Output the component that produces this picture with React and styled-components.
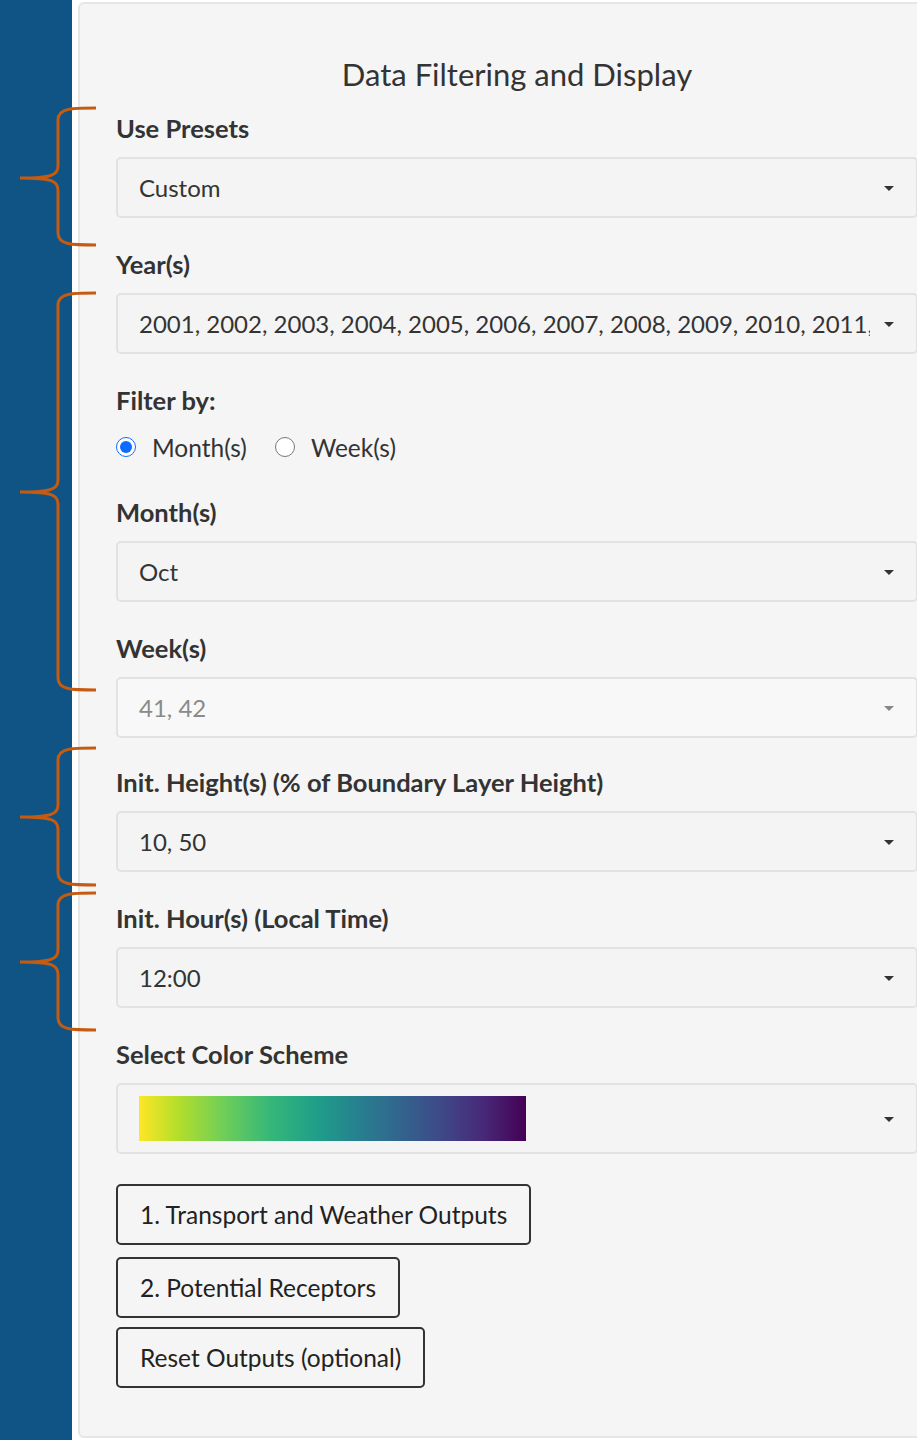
import React from 'react'
import styled, { createGlobalStyle } from 'styled-components'

const GlobalStyle = createGlobalStyle`
  html, body {
    margin: 0;
    padding: 0;
    background: #ffffff;
    overflow-x: hidden;
  }
  body {
    font-family: Lato, "Open Sans", "Liberation Sans", sans-serif;
    color: #333333;
  }
`

const Page = styled.div`
  position: relative;
  display: flex;
  gap: 6px;
  width: 100%;
  min-height: 1440px;
`

const Sidebar = styled.div`
  flex: 0 0 72px;
  background: #0f5484;
`

const Panel = styled.div`
  flex: 0 0 878px;
  min-width: 0;
  box-sizing: border-box;
  margin-top: 2px;
  height: 1436px;
  padding: 53px 36px 0;
  background: #f5f5f5;
  border: 2px solid #e6e6e6;
  border-radius: 6px;
  display: flex;
  flex-direction: column;
`

const Title = styled.h3`
  margin: 0 0 24px;
  font-size: 31px;
  font-weight: 400;
  line-height: 34px;
  text-align: center;
  color: #333;
`

const Field = styled.div`
  display: flex;
  flex-direction: column;
  min-width: 0;
  margin-bottom: ${({ $after }) => $after ?? 33}px;
`

const Label = styled.label`
  font-size: 25.5px;
  font-weight: 700;
  line-height: 26px;
  color: #333;
  margin-bottom: ${({ $gap }) => $gap ?? 16}px;
`

const Select = styled.div`
  position: relative;
  box-sizing: border-box;
  min-width: 0;
  height: ${({ $tall }) => ($tall ? 71 : 61)}px;
  padding: 0 46px 0 21px;
  display: flex;
  align-items: center;
  background: ${({ $disabled }) => ($disabled ? '#f8f8f8' : '#f4f4f4')};
  border: 2px solid #e2e2e2;
  border-radius: 5px;
  font-size: 24px;
  color: ${({ $disabled }) => ($disabled ? '#8a8a8a' : '#333')};
`

const Value = styled.span`
  min-width: 0;
  white-space: nowrap;
  overflow: hidden;
`

const Caret = styled.span`
  position: absolute;
  right: 22px;
  top: 50%;
  margin-top: -2px;
  border-left: 5px solid transparent;
  border-right: 5px solid transparent;
  border-top: 5px solid ${({ $disabled }) => ($disabled ? '#888' : '#333')};
`

const Gradient = styled.div`
  width: 387px;
  height: 45px;
  background: linear-gradient(
    to right,
    #fde725 0%,
    #b5de2b 10%,
    #6ece58 22%,
    #35b779 34%,
    #1f9e89 46%,
    #26828e 56%,
    #31688e 66%,
    #3e4989 78%,
    #482878 89%,
    #440154 100%
  );
`

const RadioRow = styled.div`
  display: flex;
  align-items: center;
  gap: 28px;
  height: 26px;
  margin-bottom: 39px;
`

const RadioOption = styled.label`
  display: flex;
  align-items: center;
  gap: 16px;
  font-size: 24.5px;
  color: #333;
`

const Radio = styled.input`
  width: 20px;
  height: 20px;
  margin: 0;
  accent-color: #0b6cff;
`

const ButtonStack = styled.div`
  display: flex;
  flex-direction: column;
  align-items: flex-start;
`

const Button = styled.button`
  box-sizing: border-box;
  height: 61px;
  padding: 0 22px;
  background: #f5f5f5;
  border: 2px solid #333;
  border-radius: 5px;
  font-family: inherit;
  font-size: 24.5px;
  color: #222;
  margin-bottom: ${({ $after }) => $after ?? 0}px;
`

const Braces = styled.svg`
  position: absolute;
  left: 0;
  top: 0;
  pointer-events: none;
`

// curly bracket: top arm, spine, point at ym, spine, bottom arm
const brace = (y0, ym, y1) =>
  `M96 ${y0} C72 ${y0} 58 ${y0} 58 ${y0 + 12} L58 ${ym - 12} C58 ${ym - 3} 52 ${ym} 20 ${ym} ` +
  `M20 ${ym} C52 ${ym} 58 ${ym + 3} 58 ${ym + 12} L58 ${y1 - 12} C58 ${y1} 72 ${y1} 96 ${y1}`

const groups = [
  [108, 178, 245],
  [293, 492, 690],
  [748, 817, 885],
  [893, 962, 1030],
]

const SelectInput = ({ value, disabled, tall, children }) => (
  <Select $disabled={disabled} $tall={tall}>
    {children || <Value>{value}</Value>}
    <Caret $disabled={disabled} />
  </Select>
)

const years = Array.from({ length: 20 }, (_, i) => 2001 + i).join(', ')

export default function App() {
  return (
    <>
      <GlobalStyle />
      <Page>
        <Sidebar />
        <Panel>
          <Title>Data Filtering and Display</Title>

          <Field>
            <Label>Use Presets</Label>
            <SelectInput value="Custom" />
          </Field>

          <Field>
            <Label>Year(s)</Label>
            <SelectInput value={years} />
          </Field>

          <Label $gap={21}>Filter by:</Label>
          <RadioRow>
            <RadioOption>
              <Radio type="radio" name="filter" defaultChecked />
              Month(s)
            </RadioOption>
            <RadioOption>
              <Radio type="radio" name="filter" />
              Week(s)
            </RadioOption>
          </RadioRow>

          <Field>
            <Label>Month(s)</Label>
            <SelectInput value="Oct" />
          </Field>

          <Field $after={31}>
            <Label>Week(s)</Label>
            <SelectInput value="41, 42" disabled />
          </Field>

          <Field>
            <Label>Init. Height(s) (% of Boundary Layer Height)</Label>
            <SelectInput value="10, 50" />
          </Field>

          <Field>
            <Label>Init. Hour(s) (Local Time)</Label>
            <SelectInput value="12:00" />
          </Field>

          <Field $after={30}>
            <Label>Select Color Scheme</Label>
            <SelectInput tall>
              <Gradient />
            </SelectInput>
          </Field>

          <ButtonStack>
            <Button $after={12}>1. Transport and Weather Outputs</Button>
            <Button $after={9}>2. Potential Receptors</Button>
            <Button>Reset Outputs (optional)</Button>
          </ButtonStack>
        </Panel>

        <Braces width="100" height="1440" viewBox="0 0 100 1440">
          {groups.map(([a, m, b]) => (
            <path key={a} d={brace(a, m, b)} fill="none" stroke="#c55a11" strokeWidth="3" />
          ))}
        </Braces>
      </Page>
    </>
  )
}
